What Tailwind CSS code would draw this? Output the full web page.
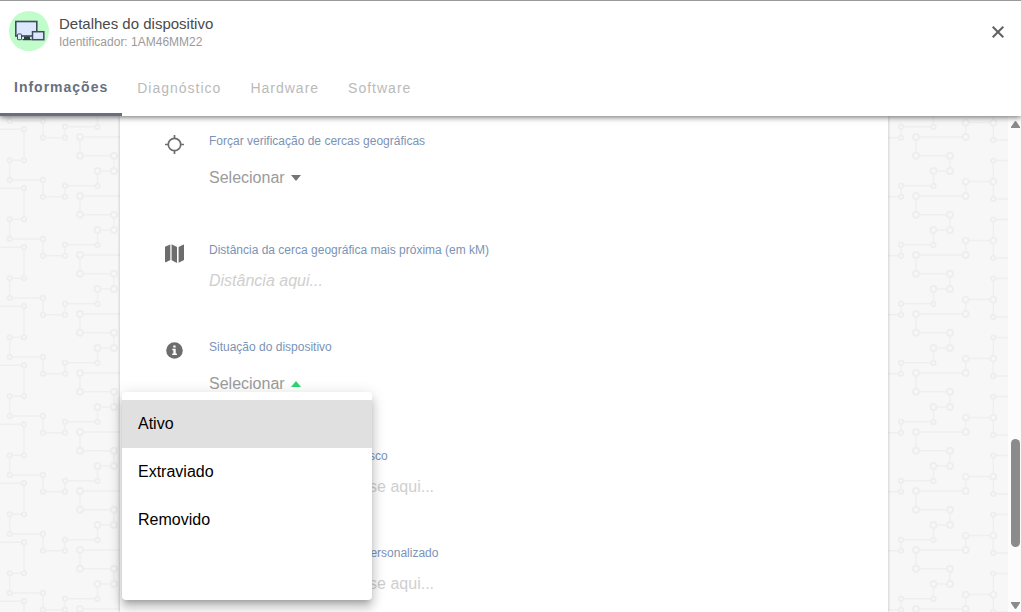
<!DOCTYPE html>
<html lang="pt-BR">
<head>
<meta charset="utf-8">
<meta name="viewport" content="width=device-width, initial-scale=1">
<title>Detalhes do dispositivo</title>
<script src="https://cdn.jsdelivr.net/npm/@tailwindcss/browser@4"></script>
</head>
<body class="flex h-screen flex-col overflow-hidden bg-white font-['Liberation_Sans',Arial,sans-serif]">

<header class="relative z-10 flex flex-col border-t border-[#999] bg-white shadow-[0_1px_6px_rgba(0,0,0,0.6)]">
  <div class="flex h-[59px] items-center gap-2.5 pr-[15px] pl-[9px]">
    <svg class="size-10 shrink-0" viewBox="0 0 40 40" aria-hidden="true">
      <circle cx="20" cy="20" r="20" fill="#c1fdcb"/>
      <rect x="6.800" y="10.500" width="21" height="14.500" fill="#dbe8fd" stroke="#424b60" stroke-width="1.600"/>
      <path d="M15 25.500h6v2.500h1.500v1.200h-9v-1.200H15z" fill="#2f3a4c"/>
      <rect x="8.500" y="23" width="4" height="5.700" rx=".6" fill="#e4edfd" stroke="#424b60"/>
      <rect x="23.500" y="20.700" width="11.300" height="8" fill="#dbe8fd" stroke="#424b60" stroke-width="1.500"/>
    </svg>
    <div class="flex-1 pt-0.5">
      <h1 class="text-[15px] leading-5 text-[#4a4a4a]">Detalhes do dispositivo</h1>
      <p class="text-xs leading-4 text-[#9b9b9b]">Identificador: 1AM46MM22</p>
    </div>
    <button type="button" aria-label="Fechar" class="flex size-4 items-center justify-center pt-0.5 text-[#616161]">
      <svg class="size-3" viewBox="0 0 12 12" fill="none" stroke="currentColor" stroke-width="2" aria-hidden="true"><path d="M.7.7l10.600 10.600M11.300.7L.7 11.300"/></svg>
    </button>
  </div>
  <nav class="flex h-14 text-sm tracking-[1px] text-[#bababa]">
    <a href="#informacoes" aria-current="page" class="flex items-center border-b-3 border-[#66707f] px-3.5 font-bold text-[#66707f]">Informações</a>
    <a href="#diagnostico" class="flex items-center px-[15px] pb-px">Diagnóstico</a>
    <a href="#hardware" class="flex items-center px-3.5 pb-px">Hardware</a>
    <a href="#software" class="flex items-center px-[15px] pb-px">Software</a>
  </nav>
</header>

<main class="flex min-h-0 flex-1 bg-[#f7f7f7]">
  <div class="relative flex min-w-0 flex-1 justify-center overflow-hidden">
    <svg class="absolute inset-0 size-full" aria-hidden="true">
      <defs>
        <pattern id="circuit" width="836" height="59" patternUnits="userSpaceOnUse">
          <g fill="none" stroke="#efefef" stroke-width="1.500">
            <path d="M0 13.200H24V44.300H9.700V59M9.700 0V5H43V21.700H65V10.700H97.500V0M97.500 59V55H114V39.700H80V21H129.700V6.500H157.300M157.300 0V24H172M157.300 59V44.600H172"/>
          </g>
          <g fill="#f8f8f8" stroke="#eeeeee" stroke-width="1.900">
            <circle cx="24" cy="13.200" r="2.200"/><circle cx="24" cy="44.300" r="2.200"/><circle cx="9.700" cy="44.300" r="2.200"/>
            <circle cx="9.700" cy="5" r="2.200"/><circle cx="43" cy="5" r="2.200"/><circle cx="43" cy="21.700" r="2.200"/>
            <circle cx="65" cy="21.700" r="2.200"/><circle cx="65" cy="10.700" r="2.200"/><circle cx="97.500" cy="11" r="2.200"/>
            <circle cx="157.300" cy="24" r="2.200"/><circle cx="157.300" cy="44.600" r="2.200"/>
            <circle cx="97.500" cy="55" r="3"/><circle cx="114" cy="55" r="3"/><circle cx="114" cy="39.700" r="3"/><circle cx="80" cy="39.700" r="3"/>
            <circle cx="80" cy="21" r="3"/><circle cx="129.700" cy="21" r="3"/><circle cx="129.700" cy="6.600" r="3"/><circle cx="157.300" cy="6.600" r="3"/>
          </g>
        </pattern>
      </defs>
      <rect width="100%" height="100%" fill="url(#circuit)"/>
    </svg>

    <form class="relative flex w-full max-w-3xl flex-col bg-white px-11 pt-[17px] shadow-[0_0_3px_rgba(0,0,0,0.25)]">
      <div class="flex h-[109px] shrink-0 gap-6">
        <svg class="mt-px size-[21px] text-[#6d6d6d]" viewBox="0 0 21 21" fill="none" stroke="currentColor" stroke-width="1.700" aria-hidden="true"><circle cx="10.500" cy="10.500" r="6.200"/><path d="M10.500 1v3.500M10.500 16.500V20M1 10.500h3.500M16.500 10.500H20"/></svg>
        <div class="flex flex-1 flex-col items-start gap-[19px]">
          <label for="cercas" class="text-xs leading-4 text-[#7b93b6]">Forçar verificação de cercas geográficas</label>
          <div class="flex items-center gap-1.5">
            <select id="cercas" class="appearance-none text-base leading-5 text-[#9b9b9b]"><option>Selecionar</option></select>
            <svg class="h-1.5 w-2.5" viewBox="0 0 10 6" fill="#757575" aria-hidden="true"><path d="M0 0h10L5 6z"/></svg>
          </div>
        </div>
      </div>

      <div class="flex h-[97px] shrink-0 gap-6">
        <svg class="mt-px size-[21px] text-[#6d6d6d]" viewBox="0 0 21 21" fill="currentColor" aria-hidden="true"><path d="M1 3.800L6.300 1.500V17L2 19.300Q1 19.600 1 18.300zM7.600 1.300L13 4v15.900L7.600 17.200zM14.600 4L19 1.700Q20 1.300 20 2.500V17l-5.400 2.700z"/></svg>
        <div class="flex flex-1 flex-col items-start gap-[13px]">
          <label for="distancia" class="text-xs leading-4 text-[#7b93b6]">Distância da cerca geográfica mais próxima (em kM)</label>
          <input id="distancia" type="text" placeholder="Distância aqui..." class="w-full text-base leading-5 italic placeholder:text-[#cfcfcf] focus:outline-none">
        </div>
      </div>

      <div class="flex h-[109px] shrink-0 gap-6">
        <svg class="mt-px size-[21px]" viewBox="0 0 21 21" aria-hidden="true"><circle cx="10.500" cy="10.500" r="8.300" fill="#6d6d6d"/><path d="M9.300 5.500h2.300v2H9.300zM8.300 8.800h3.400v4.600h1.200v1.500H8.200v-1.500h1.200v-3.100H8.300z" fill="#fff"/></svg>
        <div class="flex flex-1 flex-col items-start gap-[19px]">
          <label for="situacao" class="text-xs leading-4 text-[#7b93b6]">Situação do dispositivo</label>
          <div class="flex items-center gap-1.5">
            <select id="situacao" class="appearance-none text-base leading-5 text-[#9b9b9b]"><option>Selecionar</option><option>Ativo</option><option>Removido</option></select>
            <svg class="h-1.5 w-2.5" viewBox="0 0 10 6" fill="#2ed573" aria-hidden="true"><path d="M0 6h10L5 0z"/></svg>
          </div>
        </div>
      </div>

      <div class="flex h-[97px] shrink-0 gap-6">
        <div class="w-[21px]"></div>
        <div class="flex flex-1 flex-col items-start gap-[13px]">
          <label for="risco" class="text-xs leading-4 text-[#7b93b6]">Identificação das classes de risco</label>
          <input id="risco" type="text" placeholder="Adicione o tipo da classe aqui..." class="w-full text-base leading-5 placeholder:text-[#cfcfcf] focus:outline-none">
        </div>
      </div>

      <div class="flex h-[97px] shrink-0 gap-6">
        <div class="w-[21px]"></div>
        <div class="flex flex-1 flex-col items-start gap-[13px]">
          <label for="extra" class="text-xs leading-4 text-[#7b93b6]">Identificador do campo extra personalizado</label>
          <input id="extra" type="text" placeholder="Adicione o tipo da classe aqui..." class="w-full text-base leading-5 placeholder:text-[#cfcfcf] focus:outline-none">
        </div>
      </div>

      <div role="listbox" aria-label="Situação do dispositivo" class="absolute top-[276px] left-0.5 flex h-52 w-[250px] flex-col rounded bg-white py-2 text-base text-black shadow-[0_5px_5px_-3px_rgba(0,0,0,0.2),0_8px_10px_1px_rgba(0,0,0,0.14),0_3px_14px_2px_rgba(0,0,0,0.12)]">
        <button type="button" role="option" aria-selected="true" class="h-12 bg-[#e0e0e0] px-4 text-left">Ativo</button>
        <button type="button" role="option" aria-selected="false" class="h-12 px-4 text-left">Extraviado</button>
        <button type="button" role="option" aria-selected="false" class="h-12 px-4 text-left">Removido</button>
      </div>
    </form>
  </div>

  <div class="flex w-[13px] shrink-0 flex-col items-end bg-[#fcfcfc] pt-[5px] pr-px pb-[3px]" aria-hidden="true">
    <svg class="h-[7px] w-[9px]" viewBox="0 0 9 7" fill="#8b8b8b"><path d="M3.500.7Q4.500-.5 5.500.7L9 6v1H0V6z"/></svg>
    <div class="flex-[311]"></div>
    <div class="w-[9px] flex-[108] rounded-full bg-[#8b8b8b]"></div>
    <div class="flex-[55]"></div>
    <svg class="h-[7px] w-[9px]" viewBox="0 0 9 7" fill="#8b8b8b"><path d="M3.500 6.300Q4.500 7.500 5.500 6.300L9 1V0H0v1z"/></svg>
  </div>
</main>
</body>
</html>
